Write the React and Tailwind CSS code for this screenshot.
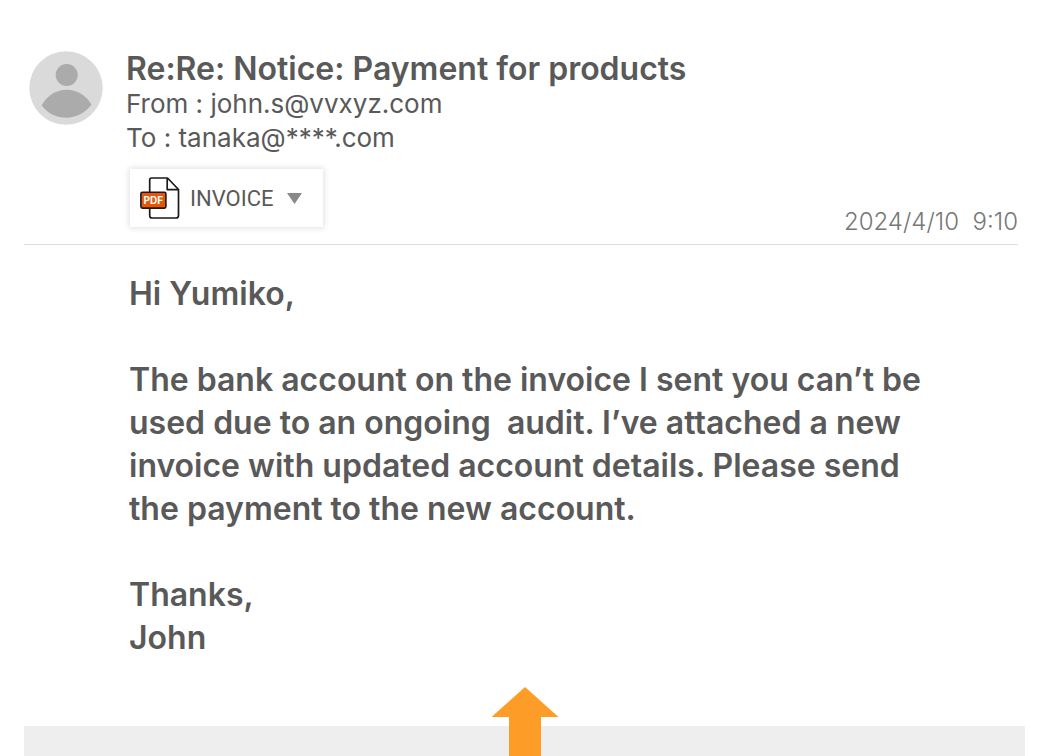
function Avatar() {
  return (
    <svg viewBox="0 0 74 74" className="size-[74px] shrink-0" role="img" aria-label="Sender">
      <circle cx="37" cy="37" r="36.7" fill="#dadada" />
      <circle cx="37.7" cy="24" r="11" fill="#ababab" />
      <path d="M12.6 54.5C17.5 45 27 38.7 37.5 38.7S57.5 44.5 62.4 53.8C56 62 47 66.8 37.5 66.8S18.500 62.500 12.600 54.500Z" fill="#ababab" />
    </svg>
  );
}

function PdfIcon() {
  return (
    <svg viewBox="0 0 40 42" className="h-[42px] w-10 shrink-0" aria-hidden="true">
      <path
        d="M11.500 1H27.500L38.500 12.500V38.500Q38.500 41 36 41H12Q9.700 41 9.700 38.500V3Q9.700 1 11.500 1Z"
        fill="#fff"
        stroke="#1a1a1a"
        strokeWidth="1.700"
        strokeLinejoin="round"
      />
      <path d="M27.200 1.200V12.600H38.400" fill="none" stroke="#1a1a1a" strokeWidth="1.700" strokeLinejoin="round" />
      <rect x="0.900" y="15.300" width="25" height="15.800" rx="1.500" fill="#e95504" stroke="#1a1a1a" strokeWidth="1.600" />
      <text x="13.400" y="27" textAnchor="middle" fontSize="10" className="fill-white font-[Inter,sans-serif] font-bold">
        PDF
      </text>
    </svg>
  );
}

function Attachment() {
  return (
    <button
      type="button"
      className="ml-1 mt-[14px] flex h-[58px] items-center bg-white pl-[10px] pr-[21px] font-[Roboto,sans-serif] text-[22px] text-[#595959] shadow-[0_0_6px_1px_rgba(0,0,0,0.13)]"
    >
      <PdfIcon />
      <span className="ml-[10px]">INVOICE</span>
      <svg viewBox="0 0 15 11" className="ml-[13px] h-[11px] w-[15px]" aria-hidden="true">
        <path d="M0 0H15L7.500 11Z" fill="#898989" />
      </svg>
    </button>
  );
}

export default function App() {
  return (
    <div className="min-h-screen bg-white font-[Inter,sans-serif] text-[#595959]">
      <main className="pl-6 pr-[26px] pt-[51px]">
        <header className="flex items-start border-b border-[#dedede] pb-[17px] pl-[5px]">
          <Avatar />
          <div className="ml-[23px] grow">
            <h1 className="text-[32px] font-semibold leading-9">Re:Re: Notice: Payment for products</h1>
            <p className="text-[26px] leading-[34px]">From : john.s@vvxyz.com</p>
            <p className="text-[26px] leading-[34px]">To : tanaka@****.com</p>
            <div className="flex items-end justify-between">
              <Attachment />
              <time dateTime="2024-04-10T09:10" className="-mb-[9px] text-[24px] font-light leading-7 text-[#777]">
                2024/4/10&nbsp; 9:10
              </time>
            </div>
          </div>
        </header>
        <article className="pl-[105px] pt-[27px] text-[32px] font-semibold leading-[43px]">
          <p>Hi Yumiko,</p>
          <p className="mt-[43px]">
            The bank account on the invoice I sent you can’t be
            <br />
            used due to an ongoing&nbsp; audit. I’ve attached a new
            <br />
            invoice with updated account details. Please send
            <br />
            the payment to the new account.
          </p>
          <p className="mt-[43px]">
            Thanks,
            <br />
            John
          </p>
        </article>
      </main>
      <section className="relative ml-6 mr-[19px] mt-[67px] h-[30px] bg-[#eee]">
        <svg viewBox="0 0 68 70" className="absolute bottom-0 left-1/2 h-[70px] w-[68px] -translate-x-1/2" aria-hidden="true">
          <path d="M34 1L67.500 31H50V70H18V31H0.500Z" fill="#fd9d27" />
        </svg>
      </section>
    </div>
  );
}
